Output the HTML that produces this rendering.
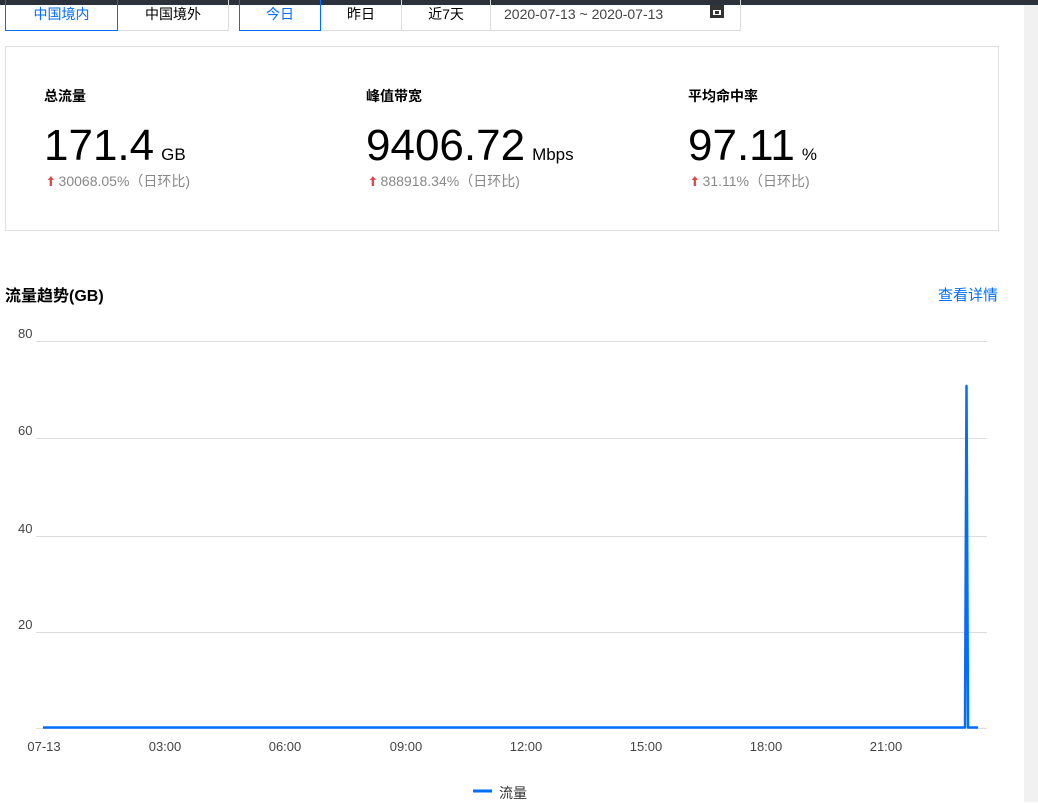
<!DOCTYPE html><html><head><meta charset="utf-8"><style>
body{margin:0;width:1038px;height:802px;background:#fff;font-family:"Liberation Sans","Noto Sans CJK SC",sans-serif;position:relative;overflow:hidden}
.a{position:absolute}
.btn{position:absolute;top:0;border:1px solid #dcdcdc;border-top:none;font-size:14px;line-height:28px;text-align:center;color:#000;box-sizing:border-box;height:31px}
.sel{border:1px solid #006eff;border-top:none;color:#006eff}
.t{font-size:14px;font-weight:bold;color:#000}
.big{font-size:44px;color:#000;white-space:nowrap}
.u{font-size:17px;margin-left:7px}
.c{font-size:14px;color:#888}
.ar{color:#e54545}
.yl{font-size:13px;color:#444}
.xl{font-size:13px;color:#444;transform:translateX(-50%)}
</style></head><body>
<div class="a" style="left:0;top:0;width:1038px;height:5px;background:#2b323c"></div>
<div class="a" style="left:1024px;top:5px;width:14px;height:797px;background:#f1f1f1"></div>
<div class="btn sel" style="left:5px;width:113px">中国境内</div>
<div class="btn" style="left:118px;width:111px;border-left:none">中国境外</div>
<div class="btn sel" style="left:239px;width:82px">今日</div>
<div class="btn" style="left:321px;width:81px;border-left:none">昨日</div>
<div class="btn" style="left:402px;width:89px;border-left:none">近7天</div>
<div class="btn" style="left:491px;width:250px;border-left:none;text-align:left;padding-left:13px;color:#444">2020-07-13 ~ 2020-07-13</div>
<div class="a" style="left:710px;top:5px;width:14px;height:13px;background:#333"><div class="a" style="left:3px;top:5px;width:8px;height:5px;background:#fff"></div><div class="a" style="left:5px;top:6px;width:4px;height:3px;background:#333"></div></div>
<div class="a" style="left:5px;top:46px;width:992px;height:183px;border:1px solid #e0e0e0"></div>
<div class="a t" style="left:44px;top:86px">总流量</div>
<div class="a big" style="left:44px;top:121px">171.4<span class="u">GB</span></div>
<div class="a c" style="left:47px;top:171px"><span class="ar">🠩</span> 30068.05%（日环比)</div>
<div class="a t" style="left:366px;top:86px">峰值带宽</div>
<div class="a big" style="left:366px;top:121px">9406.72<span class="u">Mbps</span></div>
<div class="a c" style="left:369px;top:171px"><span class="ar">🠩</span> 888918.34%（日环比)</div>
<div class="a t" style="left:688px;top:86px">平均命中率</div>
<div class="a big" style="left:688px;top:121px">97.11<span class="u">%</span></div>
<div class="a c" style="left:691px;top:171px"><span class="ar">🠩</span> 31.11%（日环比)</div>
<div class="a" style="left:5px;top:282px;font-size:16px;font-weight:bold">流量趋势(GB)</div>
<div class="a" style="left:938px;top:284px;font-size:15px;color:#006eff">查看详情</div>
<div class="a yl" style="left:18px;top:326px">80</div>
<div class="a yl" style="left:18px;top:423px">60</div>
<div class="a yl" style="left:18px;top:521px">40</div>
<div class="a yl" style="left:18px;top:617px">20</div>
<svg class="a" style="left:0;top:0" width="1038" height="802">
<g stroke="#ddd" stroke-width="1"><line x1="36" x2="987" y1="341.5" y2="341.5"/><line x1="36" x2="987" y1="438.5" y2="438.5"/><line x1="36" x2="987" y1="536.5" y2="536.5"/><line x1="36" x2="987" y1="632.5" y2="632.5"/><line x1="36" x2="987" y1="728.5" y2="728.5"/></g>
<polyline fill="none" stroke="#006eff" stroke-width="2.5" stroke-linejoin="round" points="43,727.5 965,727.5 966.5,386 968,727.5 978,727.5"/>
<line x1="473" x2="492" y1="791" y2="791" stroke="#006eff" stroke-width="3"/>
</svg>
<div class="a xl" style="left:44px;top:739px">07-13</div>
<div class="a xl" style="left:165px;top:739px">03:00</div>
<div class="a xl" style="left:285px;top:739px">06:00</div>
<div class="a xl" style="left:406px;top:739px">09:00</div>
<div class="a xl" style="left:526px;top:739px">12:00</div>
<div class="a xl" style="left:646px;top:739px">15:00</div>
<div class="a xl" style="left:766px;top:739px">18:00</div>
<div class="a xl" style="left:886px;top:739px">21:00</div>
<div class="a" style="left:499px;top:783px;font-size:14px;color:#333">流量</div>
</body></html>
